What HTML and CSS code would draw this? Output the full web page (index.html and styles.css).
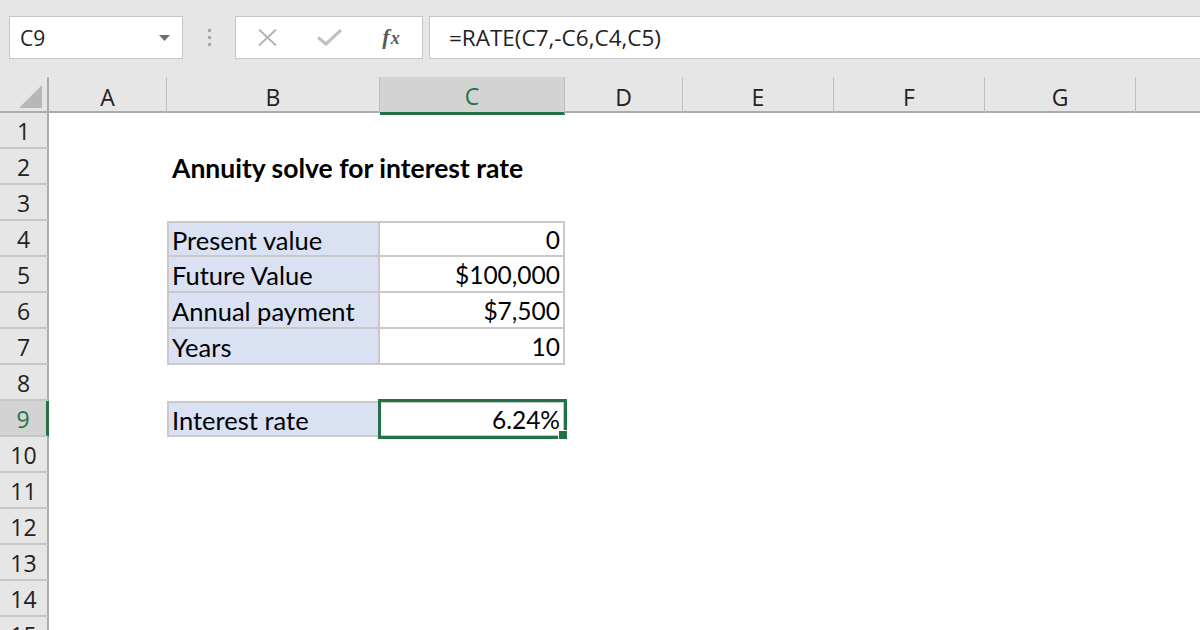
FILE: index.html
```html
<!DOCTYPE html>
<html>
<head>
<meta charset="utf-8">
<title>Annuity solve for interest rate</title>
<link rel="stylesheet" href="styles.css">
</head>
<body>
<div class="app">
  <div class="toolbar">
    <div class="namebox">
      <span class="ref">C9</span>
      <svg class="caret" width="11" height="6" viewBox="0 0 11 6"><path d="M0 0h11L5.5 6z" fill="#6e6e6e"/></svg>
    </div>
    <div class="grip"><i></i><i></i><i></i></div>
    <div class="fnbtns">
      <span class="slot"><svg width="19" height="17" viewBox="0 0 19 17"><path d="M1 0.5L18 16.5M18 0.5L1 16.5" stroke="#b4b4b4" stroke-width="2" fill="none"/></svg></span>
      <span class="slot"><svg width="25" height="17" viewBox="0 0 25 17"><path d="M1 8.5L9 15L24 1" stroke="#c2c2c2" stroke-width="3.2" fill="none"/></svg></span>
      <span class="slot fx"><span class="f">f</span><span class="x">x</span></span>
    </div>
    <div class="formula">=RATE(C7,-C6,C4,C5)</div>
  </div>

  <div class="sheet">
    <div class="row hdr">
      <div class="corner"><svg width="23" height="23" viewBox="0 0 23 23"><path d="M23 0V23H0z" fill="#b7b7b7"/></svg></div>
      <div class="ch">A</div>
      <div class="ch">B</div>
      <div class="ch sel">C</div>
      <div class="ch">D</div>
      <div class="ch">E</div>
      <div class="ch">F</div>
      <div class="ch">G</div>
      <div class="ch last"></div>
    </div>
    <div class="row"><div class="rh">1</div></div>
    <div class="row"><div class="rh">2</div><div class="cell b title">Annuity solve for interest rate</div></div>
    <div class="row"><div class="rh">3</div></div>
    <div class="row"><div class="rh">4</div><div class="cell b lbl top">Present value</div><div class="cell c num top">0</div></div>
    <div class="row"><div class="rh">5</div><div class="cell b lbl">Future Value</div><div class="cell c num">$100,000</div></div>
    <div class="row"><div class="rh">6</div><div class="cell b lbl">Annual payment</div><div class="cell c num">$7,500</div></div>
    <div class="row"><div class="rh">7</div><div class="cell b lbl">Years</div><div class="cell c num">10</div></div>
    <div class="row"><div class="rh">8</div></div>
    <div class="row"><div class="rh sel">9</div><div class="cell b lbl top">Interest rate</div><div class="cell c num top active">6.24%</div></div>
    <div class="row"><div class="rh">10</div></div>
    <div class="row"><div class="rh">11</div></div>
    <div class="row"><div class="rh">12</div></div>
    <div class="row"><div class="rh">13</div></div>
    <div class="row"><div class="rh">14</div></div>
    <div class="row"><div class="rh">15</div></div>
  </div>
</div>
</body>
</html>
```

FILE: styles.css
```css
* {
  box-sizing: border-box;
  margin: 0;
  padding: 0;
}

body {
  margin: 0;
  background: #ffffff;
  font-family: "Open Sans", "Noto Sans", sans-serif;
  color: #222222;
  overflow: hidden;
}

.app {
  width: 1200px;
  height: 630px;
  overflow: hidden;
  background: #ffffff;
}

/* ---------- formula bar ---------- */
.toolbar {
  height: 77px;
  background: #e6e6e6;
  display: flex;
  align-items: flex-start;
  padding: 16px 0 0 9px;
}

.namebox {
  width: 174px;
  height: 43px;
  background: #ffffff;
  border: 1px solid #c6c6c6;
  display: flex;
  align-items: center;
  justify-content: space-between;
  padding: 0 12px 0 10px;
  font-size: 21px;
  color: #222222;
}

.grip {
  width: 52px;
  height: 43px;
  display: flex;
  flex-direction: column;
  align-items: center;
  justify-content: center;
  gap: 4px;
}

.grip i {
  display: block;
  width: 3px;
  height: 3px;
  background: #a9a9a9;
}

.fnbtns {
  width: 188px;
  height: 43px;
  background: #ffffff;
  border: 1px solid #c6c6c6;
  display: flex;
  align-items: center;
}

.slot {
  width: 62px;
  height: 100%;
  display: flex;
  align-items: center;
  justify-content: center;
}

.fx {
  font-family: "Liberation Serif", "DejaVu Serif", serif;
  font-style: italic;
  font-weight: bold;
  color: #5a5a5a;
  font-size: 22px;
  padding-bottom: 2px;
}

.fx .x {
  font-size: 18px;
  position: relative;
  top: 2px;
  margin-left: 1px;
}

.formula {
  flex: 1;
  height: 43px;
  margin-left: 6px;
  background: #ffffff;
  border: 1px solid #c6c6c6;
  border-right: none;
  display: flex;
  align-items: center;
  padding-left: 19px;
  font-size: 22.5px;
  color: #222222;
}

/* ---------- sheet ---------- */
.sheet {
  display: flex;
  flex-direction: column;
}

.row {
  display: grid;
  grid-template-columns: 49px 118px 213px 185px 118px 151px 151px 151px 1fr;
  height: 36px;
}

.hdr {
  background: #e6e6e6;
  border-bottom: 2px solid #ababab;
  height: 36px;
}

.corner {
  border-right: 2px solid #ababab;
  display: flex;
  align-items: flex-end;
  justify-content: flex-end;
  padding: 0 5px 5px 0;
}

.ch {
  border-right: 1px solid #bfbfbf;
  display: flex;
  align-items: center;
  justify-content: center;
  font-size: 23px;
  color: #222222;
  padding-top: 3px;
}

.ch.last {
  border-right: none;
}

.ch.sel {
  background: #d3d3d3;
  color: #217346;
  border-bottom: 3px solid #217346;
  margin-bottom: -2px;
}

.rh {
  grid-column: 1;
  background: #e6e6e6;
  border-right: 2px solid #ababab;
  border-bottom: 2px solid #c6c6c6;
  display: flex;
  align-items: center;
  justify-content: center;
  font-size: 23px;
  color: #222222;
  padding-top: 1px;
}

.rh.sel {
  background: #d3d3d3;
  color: #217346;
  border-right: 3px solid #217346;
}

.cell {
  display: flex;
  align-items: center;
  font-family: "Lato", "Open Sans", sans-serif;
  font-size: 25.5px;
  color: #000000;
  white-space: nowrap;
  padding-top: 1px;
}

.b {
  grid-column: 3;
}

.c {
  grid-column: 4;
}

.title {
  font-weight: bold;
  font-size: 26.5px;
  padding-left: 5px;
  overflow: visible;
}

.lbl {
  background: #d9e1f2;
  padding-left: 3px;
  border-left: 2px solid #c9c9c9;
  border-right: 2px solid #c9c9c9;
  border-bottom: 2px solid #c9c9c9;
}

.num {
  justify-content: flex-end;
  font-size: 24.5px;
  padding-right: 3px;
  border-right: 2px solid #c9c9c9;
  border-bottom: 2px solid #c9c9c9;
}

.top {
  border-top: 2px solid #c9c9c9;
}

.active {
  position: relative;
  outline: 3px solid #217346;
  outline-offset: -1px;
}

.active::after {
  content: "";
  position: absolute;
  right: -5px;
  bottom: -5px;
  width: 8px;
  height: 8px;
  background: #217346;
  border: 1px solid #ffffff;
}
```
